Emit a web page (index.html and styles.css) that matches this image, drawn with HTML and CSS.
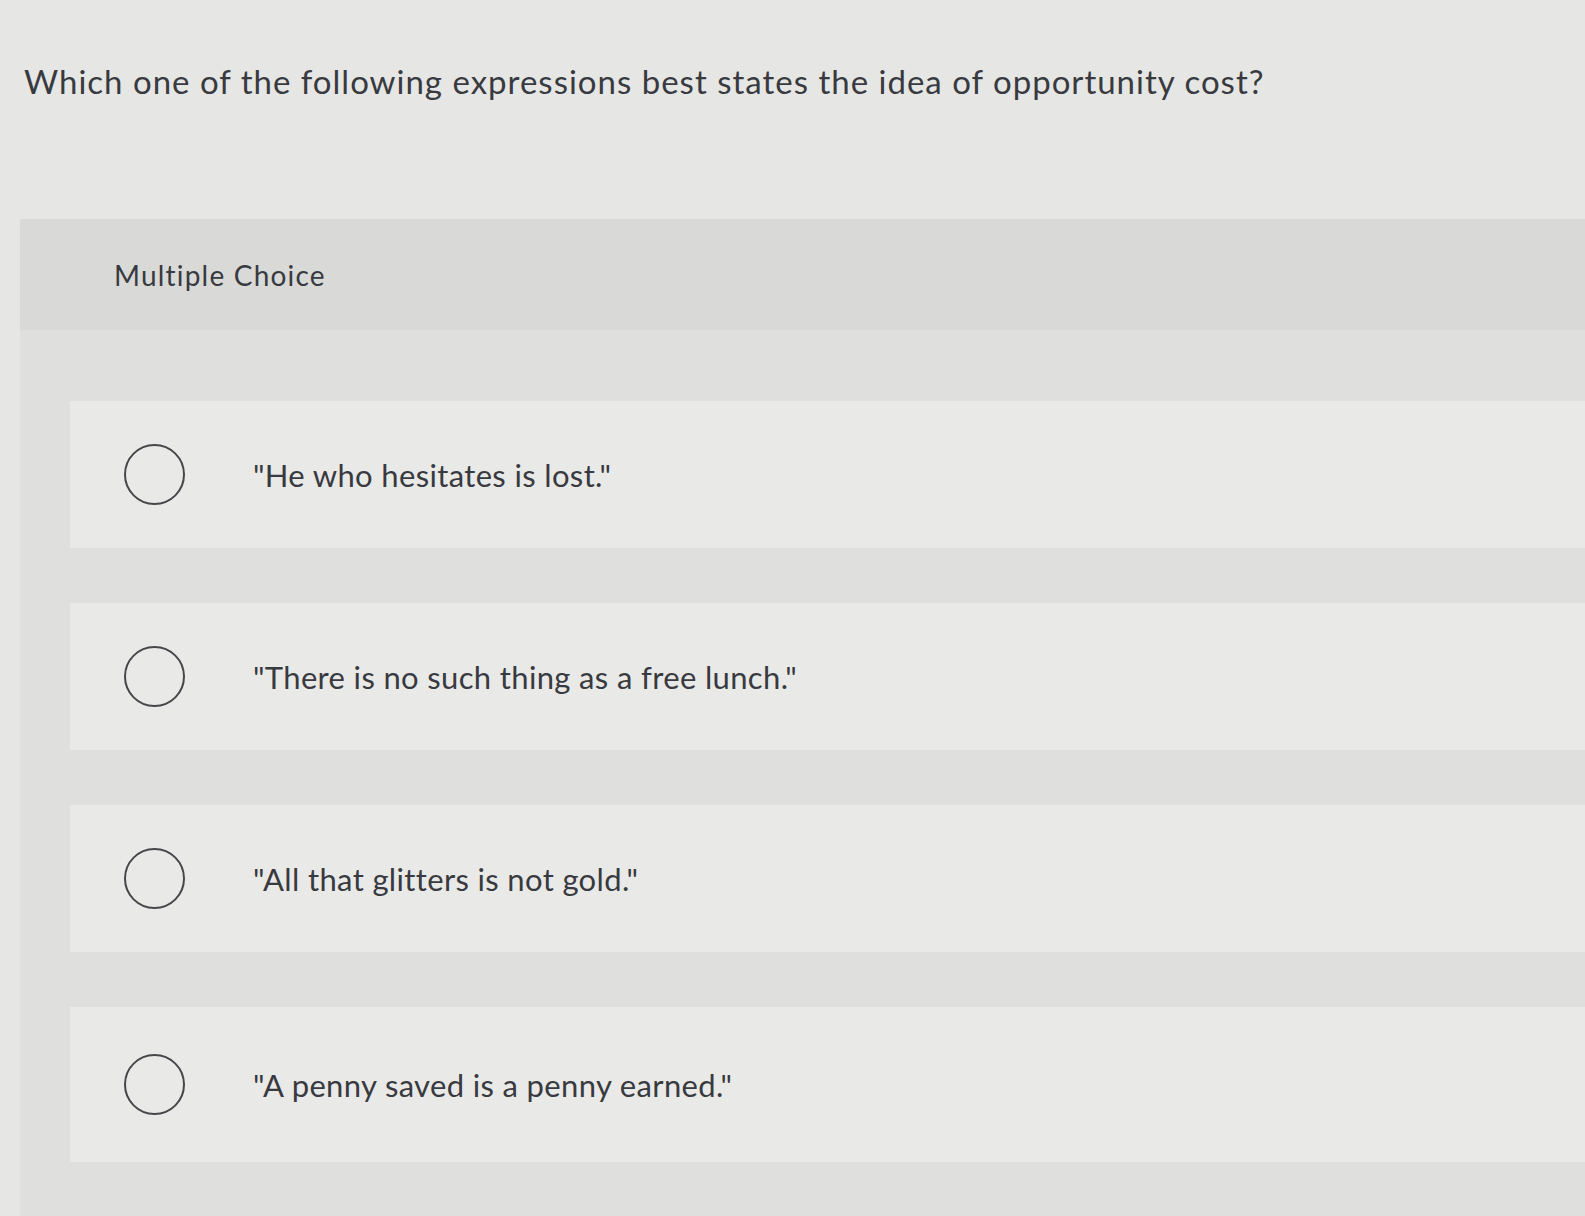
FILE: index.html
```html
<!DOCTYPE html>
<html lang="en">
<head>
<meta charset="utf-8">
<title>Multiple Choice</title>
<link rel="stylesheet" href="styles.css">
</head>
<body>
<main class="page">
  <h1 class="question">Which one of the following expressions best states the idea of opportunity cost?</h1>
  <section class="card">
    <div class="card-header">Multiple Choice</div>
    <div class="card-body">
      <label class="option">
        <span class="radio"></span>
        <span class="option-text">"He who hesitates is lost."</span>
      </label>
      <label class="option">
        <span class="radio"></span>
        <span class="option-text">"There is no such thing as a free lunch."</span>
      </label>
      <label class="option">
        <span class="radio"></span>
        <span class="option-text">"All that glitters is not gold."</span>
      </label>
      <label class="option option-last">
        <span class="radio"></span>
        <span class="option-text">"A penny saved is a penny earned."</span>
      </label>
    </div>
  </section>
</main>
</body>
</html>
```

FILE: styles.css
```css
html, body {
  margin: 0;
  padding: 0;
}

body {
  background: #e6e6e4;
  font-family: Lato, "Open Sans", "Liberation Sans", sans-serif;
  color: #383a3f;
  width: 1585px;
  height: 1216px;
  overflow: hidden;
}

.page {
  padding-top: 62px;
}

.question {
  margin: 0 0 0 24px;
  font-size: 33px;
  line-height: 38px;
  font-weight: 400;
  letter-spacing: 1px;
  white-space: nowrap;
}

.card {
  margin: 119px 0 0 20px;
  background: #dddddb;
}

.card-header {
  height: 111px;
  display: flex;
  align-items: center;
  padding-left: 94px;
  background: #d9d9d7;
  font-size: 28px;
  line-height: 32px;
  letter-spacing: 1.2px;
}

.card-body {
  display: flex;
  flex-direction: column;
  gap: 55px;
  padding: 71px 0 60px 50px;
  background: #dfdfdd;
}

.option {
  height: 147px;
  display: flex;
  align-items: center;
  gap: 68px;
  padding-left: 54px;
  background: #e9e9e7;
}

.option-last {
  height: 155px;
}

.radio {
  flex: none;
  width: 57px;
  height: 57px;
  border: 2px solid #45474b;
  border-radius: 50%;
}

.option-text {
  font-size: 31px;
  line-height: 36px;
  letter-spacing: 0.35px;
  white-space: nowrap;
}
```
